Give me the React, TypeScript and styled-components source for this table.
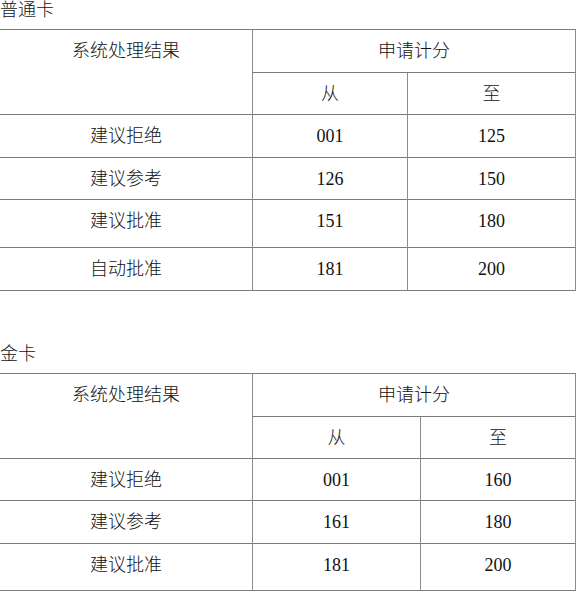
import React from 'react';
import styled, { createGlobalStyle } from 'styled-components';

const GlobalStyle = createGlobalStyle`
  body {
    margin: 0;
    padding: 0;
    background: #fff;
    color: #111;
    font-family: "Liberation Serif", "Noto Sans CJK SC", serif;
    font-size: 18px;
  }
`;

const Page = styled.div`
  width: 577px;
`;

const Section = styled.section`
  & + & {
    margin-top: 53px;
  }
`;

const Title = styled.div`
  height: 29px;
  line-height: 20px;
  font-weight: 300;
`;

const Grid = styled.div<{ $cols: string; $rows: string }>`
  display: grid;
  width: 575px;
  grid-template-columns: ${(p) => p.$cols};
  grid-template-rows: ${(p) => p.$rows};
  border-top: 1px solid #7c7c7c;
  border-right: 1px solid #8c8c8c;
`;

const Cell = styled.div<{ $col?: number; $span?: number; $rowSpan?: number }>`
  display: flex;
  justify-content: center;
  align-items: flex-start;
  line-height: 42px;
  font-weight: 300;
  border-bottom: 1px solid #7c7c7c;
  border-left: ${(p) => (p.$col && p.$col > 1 ? '1px solid #8c8c8c' : 'none')};
  grid-column: ${(p) => (p.$col ? `${p.$col} / span ${p.$span ?? 1}` : 'auto')};
  grid-row: ${(p) => (p.$rowSpan ? `span ${p.$rowSpan}` : 'auto')};
`;

type Row = [string, string, string];

const ordinary: Row[] = [
  ['建议拒绝', '001', '125'],
  ['建议参考', '126', '150'],
  ['建议批准', '151', '180'],
  ['自动批准', '181', '200'],
];

const gold: Row[] = [
  ['建议拒绝', '001', '160'],
  ['建议参考', '161', '180'],
  ['建议批准', '181', '200'],
];

function ScoreTable({ title, rows, cols, heights }: { title: string; rows: Row[]; cols: string; heights: string }) {
  return (
    <Section>
      <Title>{title}</Title>
      <Grid $cols={cols} $rows={heights}>
        <Cell $col={1} $rowSpan={2}>系统处理结果</Cell>
        <Cell $col={2} $span={2}>申请计分</Cell>
        <Cell $col={2}>从</Cell>
        <Cell $col={3}>至</Cell>
        {rows.map(([result, from, to]) => (
          <React.Fragment key={result}>
            <Cell $col={1}>{result}</Cell>
            <Cell $col={2}>{from}</Cell>
            <Cell $col={3}>{to}</Cell>
          </React.Fragment>
        ))}
      </Grid>
    </Section>
  );
}

function App() {
  return (
    <>
      <GlobalStyle />
      <Page>
        <ScoreTable
          title="普通卡"
          rows={ordinary}
          cols="252px 155px 1fr"
          heights="43px 42px 43px 42px 48px 43px"
        />
        <ScoreTable
          title="金卡"
          rows={gold}
          cols="252px 168px 1fr"
          heights="43px 42px 42px 43px 47px"
        />
      </Page>
    </>
  );
}

export default App;
